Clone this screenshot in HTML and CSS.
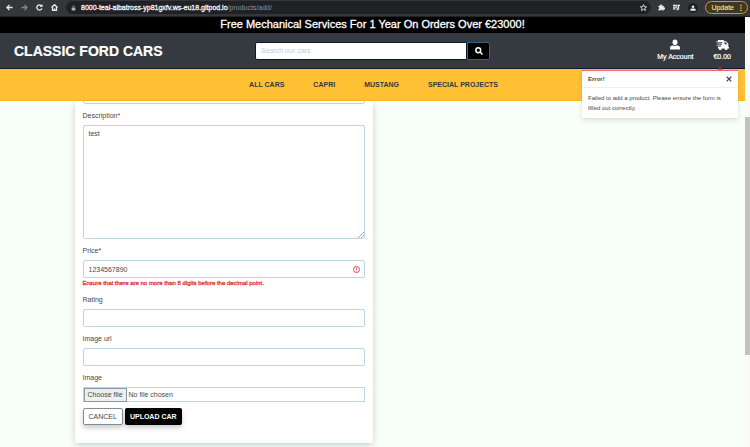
FILE: index.html
```html
<!DOCTYPE html>
<html lang="en">
<head>
<meta charset="utf-8">
<meta name="viewport" content="width=device-width, initial-scale=1">
<title>Classic Ford Cars</title>
<link rel="stylesheet" href="styles.css">
</head>
<body>
<div class="browser">
  <button class="tool" aria-label="Back"><svg viewBox="0 0 16 16"><path class="line" d="M15 8H2M8 2L2 8l6 6"/></svg></button>
  <button class="tool dim" aria-label="Forward"><svg viewBox="0 0 16 16"><path class="line" d="M1 8h13M8 2l6 6-6 6"/></svg></button>
  <button class="tool" aria-label="Reload"><svg viewBox="0 0 16 16"><path class="line" d="M13.5 10A6 6 0 1 1 12.5 4"/><path d="M15 0v7H8z"/></svg></button>
  <button class="tool" aria-label="Home"><svg viewBox="0 0 16 16"><path class="line" d="M1 8l7-6.500L15 8M3.500 7v7.500h9V7M8 14v-4"/></svg></button>
  <div class="address">
    <svg class="lock" viewBox="0 0 16 16"><path d="M2 7h12v9H2z"/><path class="line" d="M5 7V4a3 3 0 0 1 6 0v3"/></svg>
    <span class="url"><span class="host">8000-teal-albatross-yp81gxfv.ws-eu18.gitpod.io</span>/products/add/</span>
    <svg class="star" viewBox="0 0 16 16"><path class="line" d="M8 1.500l2 4.700 5 .4-3.800 3.300 1.200 4.900L8 12.200l-4.400 2.600 1.200-4.900L1 6.600l5-.4z"/></svg>
  </div>
  <button class="tool" aria-label="Extensions"><svg viewBox="0 0 16 16"><path d="M1 4h4a2.200 2.200 0 1 1 4 0h4v4a2.200 2.200 0 1 1 0 4v3H9.500a2 2 0 1 0-4 0H1v-4a2 2 0 1 0 0-4z"/></svg></button>
  <button class="tool" aria-label="Media"><svg viewBox="0 0 16 16"><path class="line" d="M0 3h10M0 7h10M0 11h6M12.500 12V3H16"/><circle cx="10.500" cy="12" r="2.500"/></svg></button>
  <button class="tool profile" aria-label="Profile"><svg viewBox="0 0 16 16"><circle cx="8" cy="4.500" r="3.500"/><path d="M1 15v-3q0-3 4-3h6q4 0 4 3v3z"/></svg></button>
  <button class="update">Update<svg viewBox="0 0 4 16"><circle cx="2" cy="3" r="1.500"/><circle cx="2" cy="8" r="1.500"/><circle cx="2" cy="13" r="1.500"/></svg></button>
</div>
<div class="viewport">
  <div class="page">
    <header class="site-header">
      <div class="banner">Free Mechanical Services For 1 Year On Orders Over €23000!</div>
      <div class="topbar">
        <a class="brand" href="#">CLASSIC FORD CARS</a>
        <form class="search">
          <input type="search" placeholder="Search our cars" aria-label="Search our cars">
          <button type="button" aria-label="Search"><svg viewBox="0 0 16 16"><circle class="line" cx="6.500" cy="6.500" r="4.800"/><path class="line" d="M10.500 10.500L15 15"/></svg></button>
        </form>
        <div class="account">
          <a href="#"><svg viewBox="0 0 16 16"><ellipse cx="8" cy="4.500" rx="3.900" ry="4.500"/><path d="M0 16v-2.500Q0 9.500 4 9.500h1q3 1.500 6 0h1q4 0 4 4V16z"/></svg>My Account</a>
          <a href="#" class="basket"><svg class="truck" viewBox="0 0 20 16"><path d="M3 1h9v2h3.500L19 7v5h1v2h-2a2.500 2.500 0 0 1-5 0H9a2.500 2.500 0 0 1-5 0H3v-3h5V9.500H1v-1h8v-1.500H2V6h8V4.500H0v-1h3z"/><path class="hole" d="M13 4.500h2l2.500 3H13z"/></svg>€0.00</a>
        </div>
      </div>
      <nav class="menu">
        <a href="#">ALL CARS</a><a href="#">CAPRI</a><a href="#">MUSTANG</a><a href="#">SPECIAL PROJECTS</a>
      </nav>
      <div class="toast" role="alert">
        <div class="toast-head"><strong>Error!</strong><button aria-label="Close"><svg viewBox="0 0 16 16"><path class="line" d="M2 2l12 12M14 2L2 14"/></svg></button></div>
        <p>Failed to add a product. Please ensure the form is filled out correctly.</p>
      </div>
    </header>
    <main>
      <form class="card">
        <div class="field first"><input type="text" aria-label="Name"></div>
        <div class="field"><label for="description">Description*</label><textarea id="description">test</textarea></div>
        <div class="field"><label for="price">Price*</label>
          <div class="invalid"><input id="price" type="text" value="1234567890" aria-describedby="price-error"><svg viewBox="0 0 16 16"><circle class="line" cx="8" cy="8" r="7"/><path class="line" d="M8 4v5M8 11v1.500"/></svg></div>
          <span class="error" id="price-error">Ensure that there are no more than 8 digits before the decimal point.</span></div>
        <div class="field"><label for="rating">Rating</label><input id="rating" type="text"></div>
        <div class="field"><label for="image-url">Image url</label><input id="image-url" type="text"></div>
        <div class="field"><label for="image">Image</label>
          <div class="file"><span class="choose">Choose file</span><span>No file chosen</span><input id="image" type="file"></div></div>
        <div class="actions"><button type="button" class="cancel">CANCEL</button><button type="button" class="submit">UPLOAD CAR</button></div>
      </form>
    </main>
  </div>
  <div class="scrollbar"><div class="thumb"></div></div>
</div>
</body>
</html>
```

FILE: styles.css
```css
* { box-sizing: border-box; }
body {
  margin: 0;
  height: 100vh;
  display: flex;
  flex-direction: column;
  overflow: hidden;
  font: 7px/10px "Liberation Sans", Arial, sans-serif;
  color: #44484c;
}
button, input, textarea { font: inherit; color: inherit; margin: 0; }
button { padding: 0; border: 0; background: none; }
a { color: inherit; text-decoration: none; }
svg { display: block; fill: currentColor; }
.line { fill: none; stroke: currentColor; stroke-width: 2; }

.browser {
  flex: none;
  display: flex;
  align-items: center;
  gap: 7px;
  height: 17px;
  padding: 0 2px 1px 6px;
  background: #35363a;
  border-bottom: 1px solid #222326;
  color: #e8eaed;
}
.tool { width: 8px; flex: none; }
.tool svg { width: 7px; height: 7px; }
.tool .line { stroke-width: 3; }
.tool.dim { color: #85878a; }
.profile { width: 10px; padding: 2px; border-radius: 50%; background: #202124; }
.profile svg { width: 6px; height: 6px; }
.address {
  flex: 1;
  display: flex;
  align-items: center;
  gap: 5px;
  height: 13px;
  padding: 0 4px 0 5px;
  border-radius: 7px;
  background: #202124;
}
.lock { width: 5px; height: 6px; color: #aaacaf; }
.url { flex: 1; color: #909397; }
.host { color: #f1f3f4; -webkit-text-stroke: 0.3px #f1f3f4; }
.star { width: 7px; height: 7px; }
.update {
  display: flex;
  align-items: center;
  gap: 6px;
  height: 13px;
  padding: 0 5px;
  border: 1px solid #c79a3a;
  border-radius: 7px;
  background: #3d3725;
  color: #fdd663;
  -webkit-text-stroke: 0.2px #fdd663;
}
.update svg { width: 2px; height: 8px; }

.viewport { flex: 1; min-height: 0; display: flex; }
.page {
  flex: 1;
  display: flex;
  flex-direction: column;
  overflow: hidden;
  background: #f7fff8;
}
.scrollbar { width: 5px; padding-top: 100px; background: #fafafa; }
.thumb { height: 72%; background: #c1c1c1; }

.site-header { position: relative; z-index: 1; flex: none; }
.banner {
  height: 16px;
  font-size: 11px;
  line-height: 15px;
  text-align: center;
  background: #000;
  color: #fff;
  -webkit-text-stroke: 0.3px #fff;
}
.topbar {
  display: grid;
  grid-template-columns: 1fr 235px 1fr;
  align-items: center;
  height: 36px;
  padding: 0 14px;
  background: #343a40;
  border-bottom: 1px solid #101a2e;
  color: #fff;
}
.brand { font-size: 14px; line-height: 18px; font-weight: bold; -webkit-text-stroke: 0.2px #fff; }
.search { display: flex; height: 18px; }
.search input {
  flex: 1;
  min-width: 0;
  padding: 0 5px;
  border: 1px solid #0c1730;
  border-radius: 2px 0 0 2px;
  background: #fff;
}
.search input::placeholder { color: #c3cbd3; }
.search button {
  width: 23px;
  display: grid;
  place-items: center;
  border: 1px solid #3c6478;
  border-radius: 0 2px 2px 0;
  background: #000;
}
.search svg { width: 8px; height: 8px; }
.search .line { stroke-width: 3; }
.account {
  display: flex;
  justify-content: flex-end;
  gap: 20px;
  -webkit-text-stroke: 0.2px #fff;
}
.account a { display: flex; flex-direction: column; align-items: center; gap: 2px; }
.account svg { width: 10px; height: 11px; }
.account .truck { width: 13px; height: 11px; }
.hole { fill: #343a40; }
.menu {
  display: flex;
  justify-content: center;
  align-items: center;
  gap: 29px;
  height: 32px;
  padding-left: 2px;
  background: #ffc033;
  border-bottom: 1px solid #ffb71a;
  color: #343a40;
  font-weight: bold;
}
.toast {
  position: absolute;
  top: 53px;
  right: 7px;
  width: 156px;
  border-top: 1px solid #f26a70;
  background: #fff;
  box-shadow: 0 2px 5px #0002;
  font-size: 6px;
}
.toast::before {
  content: "";
  position: absolute;
  top: -4px;
  right: 16px;
  border: 2px solid transparent;
  border-top: 0;
  border-bottom: 3px solid #dc3545;
}
.toast-head {
  display: flex;
  justify-content: space-between;
  align-items: center;
  height: 17px;
  padding: 0 6px;
  border-bottom: 1px solid #eee;
}
.toast-head svg { width: 6px; height: 6px; }
.toast-head .line { stroke-width: 3; }
.toast p { margin: 0; padding: 5px 6px; }

main { flex: 1; min-height: 0; }
.card {
  width: 40%;
  margin-left: 10%;
  padding: 0 8px 18px;
  background: #fff;
  border-radius: 2px;
  box-shadow: 0 2px 6px #0003;
}
.field { display: flex; flex-direction: column; margin-bottom: 6px; }
.first { height: 3px; justify-content: flex-end; }
label { line-height: 12px; margin-bottom: 3px; }
.field input, textarea, .file {
  width: 100%;
  height: 18px;
  flex: none;
  padding: 0 5px;
  border: 1px solid #bed5e3;
  border-radius: 2px;
  background: #fff;
  outline: 0;
}
.field textarea { height: 114px; padding: 3px 5px; resize: vertical; }
textarea::-webkit-resizer {
  background: linear-gradient(135deg, transparent 78%, #aaa 78% 82%, transparent 82% 88%, #aaa 88% 92%, transparent 92%);
}
.invalid { display: grid; align-items: center; }
.invalid > * { grid-area: 1 / 1; }
.invalid svg { width: 7px; height: 7px; margin-right: 5px; justify-self: end; color: #dc3545; }
.error { font-size: 6px; color: #dc3545; -webkit-text-stroke: 0.3px #dc3545; }
.field .file { position: relative; display: flex; align-items: center; gap: 2px; height: 15px; padding: 0; border-radius: 0; }
.choose { padding: 1px 3px; border: 1px solid #8c989f; background: #efefef; }
.file input { position: absolute; inset: 0; opacity: 0; }
.actions { display: flex; gap: 2px; }
.actions button { height: 17px; padding: 0 5px; border-radius: 2px; box-shadow: 0 3px 5px #0003; }
.actions .cancel { border: 1px solid #858b90; background: #fff; }
.actions .submit { background: #000; color: #fff; font-weight: bold; }
```
